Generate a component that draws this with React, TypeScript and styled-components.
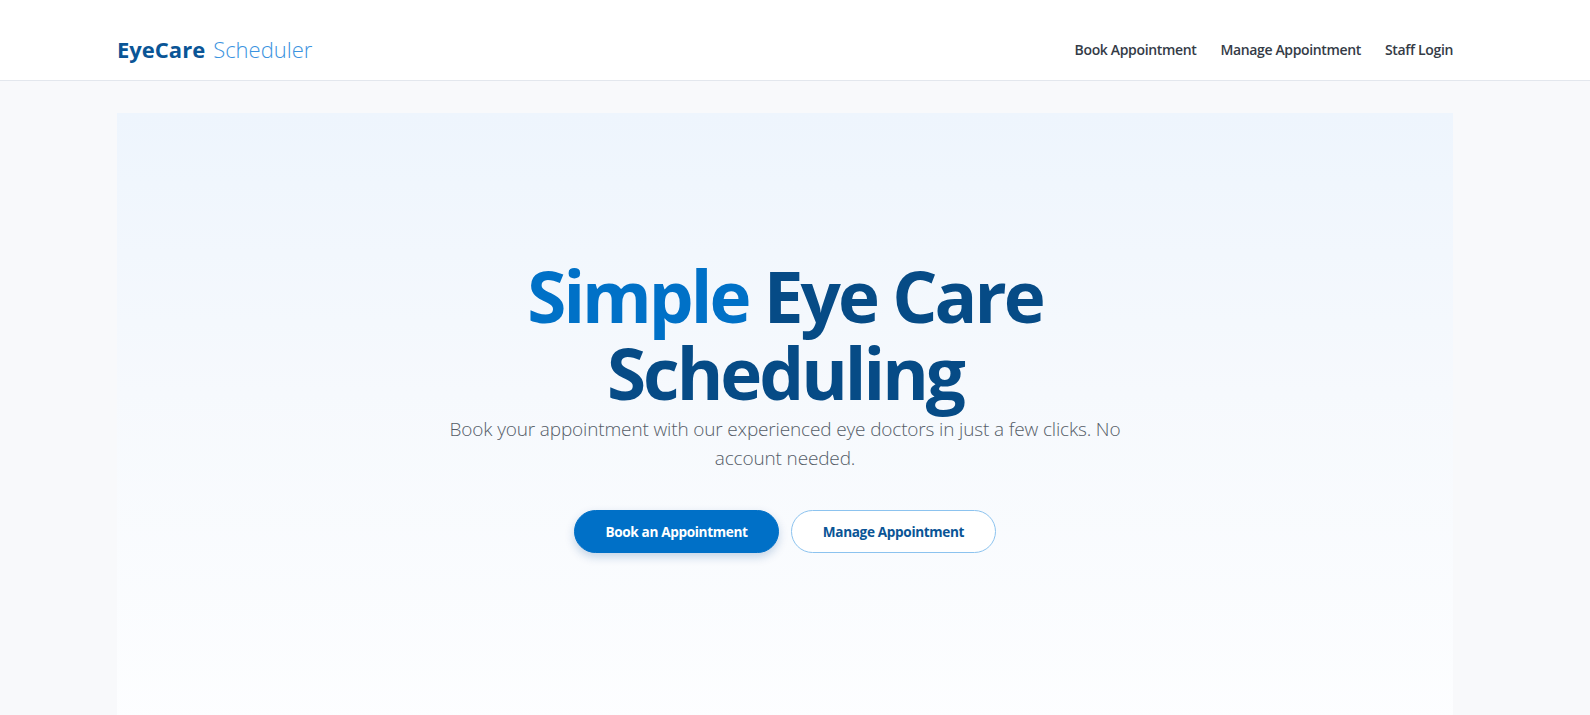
import { createGlobalStyle, styled } from "styled-components";

const GlobalStyle = createGlobalStyle`
  * { box-sizing: border-box; }
  body {
    margin: 0;
    font-family: "Open Sans", "Noto Sans", sans-serif;
    background: #f8f9fb;
    color: #333a44;
  }
`;

const Page = styled.div`
  min-height: 100vh;
  background: #f8f9fb;
`;

const Header = styled.header`
  background: #ffffff;
  border-bottom: 1px solid #e3e7ed;
  padding: 28px 20px 10px 0;
`;

const HeaderInner = styled.div`
  max-width: 1336px;
  margin: 0 auto;
  height: 42px;
  display: flex;
  align-items: center;
  justify-content: space-between;
`;

const Logo = styled.a`
  font-size: 22px;
  text-decoration: none;
  display: flex;
  gap: 8px;
`;

const LogoPart = styled.span<{ $strong?: boolean }>`
  font-weight: ${(p) => (p.$strong ? 700 : 300)};
  color: ${(p) => (p.$strong ? "#0a5596" : "#3b93e0")};
`;

const Nav = styled.nav`
  display: flex;
  gap: 24px;
`;

const NavLink = styled.a`
  font-size: 14px;
  font-weight: 600;
  color: #343b46;
  text-decoration: none;
  letter-spacing: -0.35px;
`;

const Main = styled.main`
  padding: 32px 20px 0 0;
`;

const Hero = styled.section`
  max-width: 1336px;
  margin: 0 auto;
  min-height: 620px;
  background: linear-gradient(180deg, #eef5fd 0%, #f6f9fd 45%, #fdfeff 100%);
  padding-top: 144px;
  display: flex;
  flex-direction: column;
  align-items: center;
  text-align: center;
`;

const Title = styled.h1`
  margin: 0;
  font-size: 71px;
  line-height: 77px;
  font-weight: 700;
  letter-spacing: -3px;
  color: #064b86;
`;

const Accent = styled.span`
  color: #0071c7;
`;

const Subtitle = styled.p`
  margin: 4px 0 0;
  max-width: 690px;
  font-size: 19px;
  line-height: 29px;
  font-weight: 300;
  letter-spacing: -0.15px;
  color: #555d68;
`;

const Actions = styled.div`
  margin-top: 37px;
  display: flex;
  gap: 12px;
`;

const Button = styled.a<{ $primary?: boolean }>`
  width: 205px;
  height: 43px;
  border-radius: 999px;
  display: flex;
  align-items: center;
  justify-content: center;
  font-size: 13.6px;
  font-weight: 700;
  text-decoration: none;
  letter-spacing: -0.35px;
  background: ${(p) => (p.$primary ? "#0070c7" : "#ffffff")};
  color: ${(p) => (p.$primary ? "#ffffff" : "#0a5596")};
  border: 1px solid ${(p) => (p.$primary ? "#0070c7" : "#8cc3ef")};
  box-shadow: ${(p) => (p.$primary ? "0 4px 10px rgba(0, 70, 140, 0.22)" : "none")};
`;

export default function App() {
  return (
    <Page>
      <GlobalStyle />
      <Header>
        <HeaderInner>
          <Logo href="#">
            <LogoPart $strong>EyeCare</LogoPart>
            <LogoPart>Scheduler</LogoPart>
          </Logo>
          <Nav>
            <NavLink href="#">Book Appointment</NavLink>
            <NavLink href="#">Manage Appointment</NavLink>
            <NavLink href="#">Staff Login</NavLink>
          </Nav>
        </HeaderInner>
      </Header>
      <Main>
        <Hero>
          <Title>
            <Accent>Simple</Accent> Eye Care
            <br />
            Scheduling
          </Title>
          <Subtitle>
            Book your appointment with our experienced eye doctors in just a few clicks. No account needed.
          </Subtitle>
          <Actions>
            <Button href="#" $primary>Book an Appointment</Button>
            <Button href="#">Manage Appointment</Button>
          </Actions>
        </Hero>
      </Main>
    </Page>
  );
}
